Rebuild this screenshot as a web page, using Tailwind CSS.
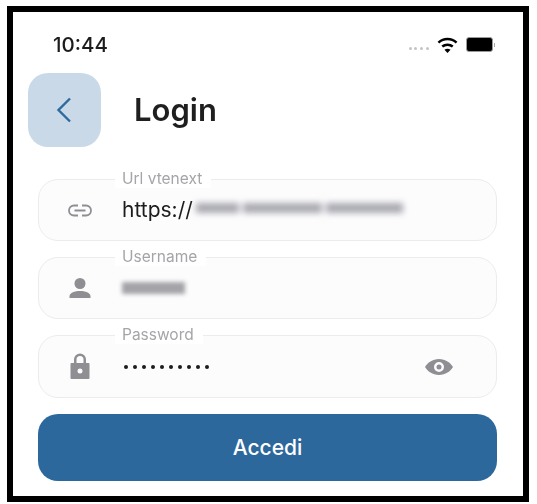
<!DOCTYPE html>
<html lang="it">
<head>
    <meta charset="UTF-8">
    <meta name="viewport" content="width=device-width, initial-scale=1.0">
    <title>Login</title>
    <script src="https://cdn.jsdelivr.net/npm/@tailwindcss/browser@4"></script>
</head>
<body class="bg-white font-['Inter',sans-serif]">
    <div class="w-[537px] h-[504px] pt-[6px] pl-[7px]">
        <div class="w-[522px] h-[496px] border-[6px] border-black bg-white pl-[25px] pr-[26px] box-border">

            <!-- Status bar -->
            <div class="h-[61px] pl-[15px] pr-[2px] pt-[4px] flex justify-between items-center">
                <span class="text-[20.500px] leading-[24px] font-medium text-[#1c1c1e] blur-[0.3px]">10:44</span>
                <div class="flex items-center gap-[8px] blur-[0.4px]">
                    <div class="flex gap-[2.800px] mt-[7px]">
                        <i class="size-[3px] rounded-full bg-[#c4c4c4]"></i>
                        <i class="size-[3px] rounded-full bg-[#c4c4c4]"></i>
                        <i class="size-[3px] rounded-full bg-[#c4c4c4]"></i>
                        <i class="size-[3px] rounded-full bg-[#c4c4c4]"></i>
                    </div>
                    <svg class="w-[21px] h-[18px]" viewBox="0 0 22 18" fill="none" stroke="#000" stroke-width="2.600" stroke-linecap="butt">
                        <path d="M1.500 6.500C7 1.500 15 1.500 20.500 6.500"/>
                        <path d="M5.500 10.500C8.500 8 13.500 8 16.500 10.500"/>
                        <path d="M11 17.500L7.800 14C9.800 12.700 12.200 12.700 14.200 14Z" fill="#000" stroke="none"/>
                    </svg>
                    <div class="flex items-center gap-[1px]">
                        <div class="w-[27px] h-[15px] rounded-[3px] bg-black border border-[#9a9a9a]"></div>
                        <div class="w-[1px] h-[4px] bg-[#aaa]"></div>
                    </div>
                </div>
            </div>

            <!-- Header -->
            <div class="flex items-center -ml-[10px]">
                <button class="w-[73px] h-[74px] rounded-[20px] bg-[#c9d9e8] flex items-center justify-center">
                    <svg class="w-[18px] h-[28px] -ml-[1px]" viewBox="0 0 18 28" fill="none" stroke="#2f6a9e" stroke-width="2.400">
                        <path d="M15 2.500L3.500 14L15 25.500"/>
                    </svg>
                </button>
                <h1 class="ml-[33px] text-[31px] leading-[36px] font-semibold text-[#1f1f1f] blur-[0.3px]">Login</h1>
            </div>

            <div class="mt-[32px] flex flex-col gap-[16px]">
                <!-- Url -->
                <div class="relative h-[62px] rounded-[20px] border border-[#ececee] bg-[#fcfcfd] flex items-center">
                    <span class="absolute left-[76px] -top-[10px] pl-[7px] pr-[9px] bg-white text-[15.500px] leading-[18px] text-[#a5a5a9] blur-[0.3px]">Url vtenext</span>
                    <svg class="w-[26px] h-[13px] ml-[28px]" viewBox="0 0 26 13" fill="none" stroke="#8e8e93" stroke-width="1.800">
                        <path d="M11 1.500H7a5 5 0 0 0 0 10h4M15 1.500h4a5 5 0 0 1 0 10h-4M7.500 6.500h11"/>
                    </svg>
                    <span class="ml-[29px] text-[21px] leading-[26px] text-[#1c1c1e] blur-[0.3px]">https://</span>
                    <div class="flex gap-[4px] blur-[3px] -mt-[5px] ml-[3px]">
                        <div class="w-[43px] h-[10px] bg-[#a8a8b0]"></div>
                        <div class="w-[79px] h-[10px] bg-[#a8a8b0]"></div>
                        <div class="w-[77px] h-[10px] bg-[#a8a8b0]"></div>
                    </div>
                </div>

                <!-- Username -->
                <div class="relative h-[62px] rounded-[20px] border border-[#ececee] bg-[#fcfcfd] flex items-center">
                    <span class="absolute left-[76px] -top-[10px] pl-[7px] pr-[9px] bg-white text-[15.500px] leading-[18px] text-[#a5a5a9] blur-[0.3px]">Username</span>
                    <svg class="w-[22px] h-[22px] ml-[30px] -mt-[1px]" viewBox="0 0 22 22" fill="#8e8e93">
                        <circle cx="11" cy="6.500" r="5.500"/>
                        <path d="M0.500 19.500C0.500 15.500 6 14 11 14C16 14 21.500 15.500 21.500 19.500V21H0.500Z"/>
                    </svg>
                    <div class="ml-[31px] w-[63px] h-[12px] bg-[#a4a4a8] blur-[2px]"></div>
                </div>

                <!-- Password -->
                <div class="relative h-[63px] rounded-[20px] border border-[#ececee] bg-[#fcfcfd] flex items-center">
                    <span class="absolute left-[76px] -top-[10px] pl-[7px] pr-[9px] bg-white text-[15.500px] leading-[18px] text-[#a5a5a9] blur-[0.3px]">Password</span>
                    <svg class="w-[22px] h-[28px] ml-[30px] -mt-[1px]" viewBox="0 0 22 28" fill="#8e8e93">
                        <path fill-rule="evenodd" d="M2.500 11H5V7.500a6 6 0 0 1 12 0V11h2.500a1 1 0 0 1 1 1v14a1 1 0 0 1-1 1H2.500a1 1 0 0 1-1-1V12a1 1 0 0 1 1-1ZM7.500 11h7V7.500a3.500 3.500 0 0 0-7 0ZM11 16.500a2.500 2.500 0 1 0 0 5 2.500 2.500 0 0 0 0-5Z"/>
                    </svg>
                    <span class="ml-[33px] mt-[1px] flex gap-[5.500px]">
                        <i class="size-[3.500px] rounded-full bg-[#1c1c1e]"></i>
                        <i class="size-[3.500px] rounded-full bg-[#1c1c1e]"></i>
                        <i class="size-[3.500px] rounded-full bg-[#1c1c1e]"></i>
                        <i class="size-[3.500px] rounded-full bg-[#1c1c1e]"></i>
                        <i class="size-[3.500px] rounded-full bg-[#1c1c1e]"></i>
                        <i class="size-[3.500px] rounded-full bg-[#1c1c1e]"></i>
                        <i class="size-[3.500px] rounded-full bg-[#1c1c1e]"></i>
                        <i class="size-[3.500px] rounded-full bg-[#1c1c1e]"></i>
                        <i class="size-[3.500px] rounded-full bg-[#1c1c1e]"></i>
                        <i class="size-[3.500px] rounded-full bg-[#1c1c1e]"></i>
                    </span>
                    <svg class="w-[30px] h-[20px] ml-auto mr-[42px]" viewBox="0 0 30 20" fill="#8e8e93">
                        <path fill-rule="evenodd" d="M15 2C8.500 2 3.500 5.800 1 10c2.500 4.200 7.500 8 14 8s11.500-3.800 14-8c-2.500-4.200-7.500-8-14-8Zm0 3a5 5 0 1 1 0 10 5 5 0 0 1 0-10Zm0 2.500a2.500 2.500 0 1 0 0 5 2.500 2.500 0 0 0 0-5Z"/>
                    </svg>
                </div>
            </div>

            <button class="mt-[16px] w-full h-[67px] rounded-[20px] bg-[#2d689d] text-white text-[21px] font-medium">Accedi</button>
        </div>
    </div>
</body>
</html>
